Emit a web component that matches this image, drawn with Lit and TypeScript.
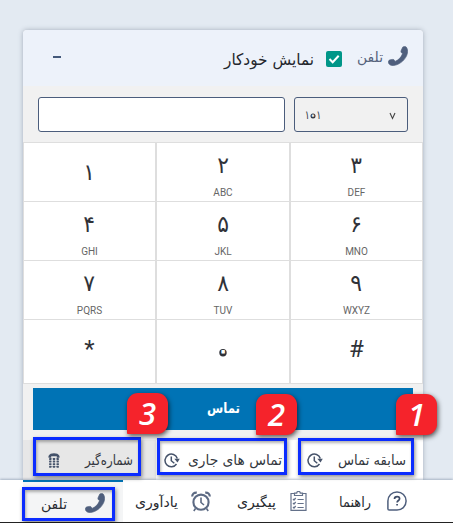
import { LitElement, html, css, svg } from "lit";
import { customElement, property } from "lit/decorators.js";

const handset = svg`<path d="M15 1C16.200-.1 18-.1 18.900 1.200 20.400 3.500 20.500 6.700 19 10c-2.500 5.300-8 9.400-13.500 10C2.300 20.300.4 18.700.2 16.600.1 15.200.9 14.400 2.200 14.100l2.500-.4c.9-.1 1.500.3 1.900 1l.6 1.100c3.500-1.500 6.500-4.500 7.600-7.900l-1-1c-.6-.6-.8-1.300-.5-2.100z" fill="#4f5f7d" stroke="#4f5f7d" stroke-width=".7"/>`;

const icons: Record<string, { box: string; w: number; h: number; body: unknown }> = {
  phone: { box: "-.2 -.2 20.700 20.700", w: 20, h: 20, body: handset },
  history: {
    box: "0 0 16 15", w: 16, h: 15,
    body: svg`<g fill="none" stroke="#46536a" stroke-width="1.500"><path d="M13.300 5.500A6.300 6.300 0 1 0 12.500 11"/><path d="M7.300 3.500v4.200l3 2.600"/></g><path d="M10.300 5.800h5.500l-2.300 3.800z" fill="#46536a"/>`,
  },
  dialer: {
    box: "0 0 12 15", w: 12, h: 15,
    body: svg`<path d="M.5 4.800V3C1.500.9 3.500.2 6 .2s4.500.7 5.500 2.800v1.800H8.800V3.200H3.200v1.600z" fill="#45536b"/><g fill="#45536b">${[5, 7.6, 10.2, 12.8].map((y) => [1.100, 4.800, 8.500].map((x) => svg`<rect x=${x} y=${y} width="2.400" height="1.900" rx=".4"/>`))}</g>`,
  },
  help: {
    box: "0 0 20 20", w: 20, h: 20,
    body: svg`<path d="M10 .9a9.100 9.100 0 1 1 0 18.200H2.200Q.9 19.100.9 17.800V10A9.100 9.100 0 0 1 10 .9Z" fill="none" stroke="#4f5f7d" stroke-width="1.500"/><path d="M7.500 8c0-1.600 1.100-2.400 2.600-2.400s2.500.8 2.500 2.100c0 1.800-2.500 1.800-2.500 3.800M10.100 12.900v1.700" fill="none" stroke="#3f4d68" stroke-width="1.700"/>`,
  },
  tasks: {
    box: "0 0 17 20", w: 17, h: 20,
    body: svg`<g fill="none" stroke="#64718a" stroke-width="1.200"><path d="M4.500 2.500H1v16.800h15V2.500h-3.500M4.500 4.500V2.200h2.200a1.800 1.800 0 0 1 3.600 0h2.200v2.300z"/><path d="m3 8 1 1 1.700-2M3 12l1 1 1.700-2M3 16l1 1 1.700-2M7.500 8.500h6.200M7.500 12.500h6.200M7.500 16.500h6.200"/></g>`,
  },
  alarm: {
    box: "0 0 20 21", w: 20, h: 21,
    body: svg`<g fill="none" stroke="#5c6a83"><circle cx="10" cy="11.200" r="7.600" stroke-width="2.100"/><path d="M10 6.500v5l3 2.500M4.500 17.500 2.800 20M15.500 17.500l1.700 2.500" stroke-width="1.600"/><path d="M1.200 5.500C1.200 3 3 1.400 5.800 1.600M18.800 5.500c0-2.500-1.800-4.100-4.600-3.900" stroke-width="2.200"/></g>`,
  },
};

@customElement("ui-icon")
class UiIcon extends LitElement {
  @property() name = "phone";
  static styles = css`:host { display: block; flex: none; } svg { display: block; }`;
  render() {
    const i = icons[this.name];
    return html`<svg width=${i.w} height=${i.h} viewBox=${i.box}>${i.body}</svg>`;
  }
}

/* Text run fitted to a fixed advance width. */
@customElement("fit-text")
class FitText extends LitElement {
  @property() text = "";
  @property({ type: Number }) w = 40;
  @property({ type: Number }) size = 15;
  static styles = css`
    :host { display: block; flex: none; }
    svg { display: block; overflow: visible; direction: ltr; }
    text { fill: currentColor; font-family: "DejaVu Sans", sans-serif; text-anchor: middle; }
  `;
  render() {
    return html`<svg width=${this.w} height="24"><text x=${this.w / 2} y="17" font-size=${this.size} textLength=${this.w} lengthAdjust="spacingAndGlyphs">${this.text}</text></svg>`;
  }
}

const keys = [
  ["۱", ""], ["۲", "ABC"], ["۳", "DEF"],
  ["۴", "GHI"], ["۵", "JKL"], ["۶", "MNO"],
  ["۷", "PQRS"], ["۸", "TUV"], ["۹", "WXYZ"],
  ["*", ""], ["۰", ""], ["#", ""],
];

@customElement("app-root")
class AppRoot extends LitElement {
  static styles = css`
    * { box-sizing: border-box; }
    :host { display: flex; flex-direction: column; position: relative; width: 453px; height: 523px; overflow: hidden; background: #e3eaf2; font-family: "DejaVu Sans", sans-serif; color: #303238; }
    .card { width: 400px; height: 450px; margin: 30px 0 0 23px; background: #f1f1f1; border-radius: 4px 4px 0 0; box-shadow: 0 0 5px rgba(70, 80, 100, .4); flex: none; }
    .head { height: 56px; background: #edf2fa; border-radius: 4px 4px 0 0; display: flex; padding: 0 15px 0 30px; color: #56637c; }
    .minus { width: 8px; height: 2px; background: #44597a; margin: 26px auto 0 0; }
    .auto { color: #24272d; margin: 18px 12px 0 0; }
    .check { width: 16px; height: 16px; margin: 21px 15px 0 0; background: #009688; border-radius: 2px; }
    .title { margin: 15px 5px 0 0; }
    .head ui-icon { margin-top: 16px; }
    .inputs { display: flex; gap: 9px; padding: 11px 15px 0; height: 56px; }
    .box { height: 35px; border: 1px solid #4b5d7c; border-radius: 3px; }
    .entry { width: 247px; background: #fff; }
    .select { width: 114px; display: flex; justify-content: space-between; padding: 5px 11px; color: #343944; }
    .arrow { margin-top: 9px; }
    .line { display: block; overflow: visible; direction: ltr; }
    .line text { fill: #343944; font-size: 11px; text-anchor: middle; }
    .line .hole { font-size: 9px; fill: #f1f1f1; stroke: #f1f1f1; stroke-width: 1; stroke-linejoin: round; }
    .pad { display: grid; grid-template-columns: 131px 132px 131px; grid-template-rows: 58px 58px 58px 63px; gap: 1px 2px; padding: 1px; background: #dedede; }
    .key { background: #fff; display: flex; flex-direction: column; align-items: center; justify-content: center; }
    .lettered { padding-top: 5px; }
    .digit { font-size: 23px; line-height: 28px; height: 28px; transform: scaleX(.95); }
    .letters { font: 10px/12px Roboto, sans-serif; color: #666; margin-top: 8px; height: 12px; }
    .latin { font: 24px/28px Roboto, sans-serif; transform: none; margin-top: -5px; }
    .zero { display: block; overflow: visible; }
    .zero text { font-size: 20px; fill: #fff; stroke: #fff; stroke-width: 1.200; stroke-linejoin: round; text-anchor: middle; }
    .call { height: 42px; width: 380px; margin: 4px 10px 0; background: #0073b5; color: #fff; display: flex; justify-content: center; padding-top: 8px; font-weight: bold; }
    .tabs { display: flex; height: 40px; margin-top: 10px; background: #fff; }
    .tab { display: flex; align-items: center; justify-content: space-between; color: #343840; }
    .t3 { width: 133px; background: #e7e7e7; padding: 0 23px 0 25px; }
    .t2 { width: 134px; padding: 0 8px 0 8px; }
    .t1 { width: 133px; padding: 0 17px 0 17px; }
    .footer { position: relative; height: 43px; flex: none; background: #fff; border-bottom: 1px solid #222; box-shadow: 0 -1px 2px rgba(80, 100, 130, .4); display: flex; color: #282b31; }
    .item { display: flex; align-items: flex-start; justify-content: space-between; padding-top: 11px; height: 42px; }
    .item fit-text { margin-top: -1px; }
    .f4 { width: 100px; margin-left: 23px; border-top: 2px solid #0073b5; background: #f4f5f6; padding: 11px 18px 0; }
    .f3 { width: 76px; margin-left: 12px; }
    .f2 { width: 70px; margin-left: 26px; }
    .f1 { width: 68px; margin-left: 32px; }
    .frame { position: absolute; border: 3px solid #0b2cff; box-shadow: 1px 2px 4px rgba(0, 0, 0, .45), inset 1px 2px 3px rgba(0, 0, 0, .3); }
    .m1 { left: 298px; top: 438px; width: 116px; height: 37px; }
    .m2 { left: 157px; top: 438px; width: 130px; height: 37px; }
    .m3 { left: 33px; top: 437px; width: 108px; height: 39px; }
    .m4 { left: 22px; top: 487px; width: 93px; height: 34px; }
    .badge { position: absolute; width: 41px; height: 41px; background: #f5232b; border-radius: 11px 11px 11px 1px; color: #fff; font: italic 600 31px/40px "Open Sans", sans-serif; text-align: center; box-shadow: 1px 2px 5px rgba(0, 0, 0, .65); }
    .b1 { left: 396px; top: 394px; }
    .b2 { left: 256px; top: 394px; }
    .b3 { left: 127px; top: 393px; }
  `;
  key(d: string, l: string) {
    const glyph = d === "۰"
      ? html`<svg class="zero" width="20" height="28"><circle cx="10" cy="14.700" r="3.700" fill="#303238"/><text x="10" y="19.300">${d}</text></svg>`
      : html`<div class="digit ${d === "*" || d === "#" ? "latin" : ""}">${d}</div>`;
    return html`<div class="key ${l ? "lettered" : ""}">${glyph}${l ? html`<div class="letters">${l}</div>` : ""}</div>`;
  }
  render() {
    return html`
      <div class="card">
        <div class="head">
          <div class="minus"></div>
          <fit-text class="auto" text="نمایش خودکار" w="90" size="16"></fit-text>
          <svg class="check" viewBox="0 0 16 16"><path d="m3.500 8 3.200 3.300 6-6.500" fill="none" stroke="#fff" stroke-width="2"/></svg>
          <fit-text class="title" text="تلفن" w="26" size="14"></fit-text>
          <ui-icon name="phone"></ui-icon>
        </div>
        <div class="inputs">
          <div class="box entry"></div>
          <div class="box select">
            <svg class="line" width="14" height="24"><g transform="scale(.85 1.100)"><text x="1.500" y="14.500">۱</text><text x="15" y="14.500">۱</text></g><circle cx="7" cy="13" r="2.500" fill="#343944"/><text class="hole" x="7" y="15.100">۰</text></svg>
            <svg class="arrow" width="7" height="8" viewBox="0 0 7 8"><path d="m1 1 2.500 5.500L6 1" fill="none" stroke="#444" stroke-width="1.100"/></svg>
          </div>
        </div>
        <div class="pad">${keys.map(([d, l]) => this.key(d, l))}</div>
        <div class="call"><fit-text text="تماس" w="33" size="14"></fit-text></div>
        <div class="tabs">
          <div class="tab t3"><ui-icon name="dialer"></ui-icon><fit-text text="شماره‌گیر" w="48" size="14"></fit-text></div>
          <div class="tab t2"><ui-icon name="history"></ui-icon><fit-text text="تماس های جاری" w="94" size="14"></fit-text></div>
          <div class="tab t1"><ui-icon name="history"></ui-icon><fit-text text="سابقه تماس" w="68" size="14"></fit-text></div>
        </div>
      </div>
      <div class="footer">
        <div class="item f4"><fit-text text="تلفن" w="26" size="14"></fit-text><ui-icon name="phone"></ui-icon></div>
        <div class="item f3"><fit-text text="یادآوری" w="43" size="14"></fit-text><ui-icon name="alarm"></ui-icon></div>
        <div class="item f2"><fit-text text="پیگیری" w="39" size="14"></fit-text><ui-icon name="tasks"></ui-icon></div>
        <div class="item f1"><fit-text text="راهنما" w="32" size="14"></fit-text><ui-icon name="help"></ui-icon></div>
      </div>
      <div class="frame m1"></div><div class="frame m2"></div><div class="frame m3"></div><div class="frame m4"></div>
      <div class="badge b1">1</div><div class="badge b2">2</div><div class="badge b3">3</div>
    `;
  }
}
